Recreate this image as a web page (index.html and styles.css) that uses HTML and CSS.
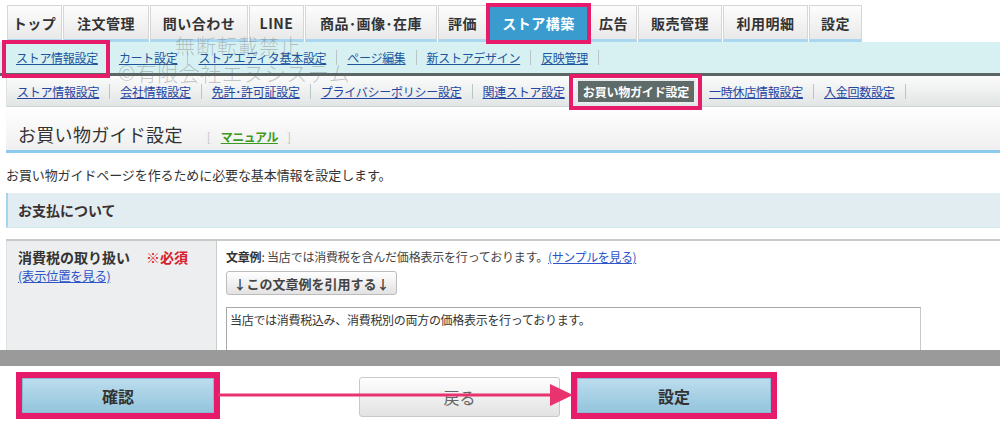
FILE: index.html
```html
<!DOCTYPE html>
<html lang="ja">
<head>
<meta charset="utf-8">
<title>お買い物ガイド設定</title>
<link rel="stylesheet" href="styles.css">
</head>
<body>
<nav class="tabs">
  <div class="tab w1">トップ</div>
  <div class="tab w2">注文管理</div>
  <div class="tab w3">問い合わせ</div>
  <div class="tab w4">LINE</div>
  <div class="tab w5">商品･画像･在庫</div>
  <div class="tab w6">評価</div>
  <div class="tab w7 active">ストア構築</div>
  <div class="tab w8">広告</div>
  <div class="tab w9">販売管理</div>
  <div class="tab w10">利用明細</div>
  <div class="tab w11">設定</div>
</nav>
<nav class="subnav">
  <a class="link hl">ストア情報設定</a><span class="sep"></span>
  <a class="link">カート設定</a><span class="sep"></span>
  <a class="link">ストアエディタ基本設定</a><span class="sep"></span>
  <a class="link">ページ編集</a><span class="sep"></span>
  <a class="link">新ストアデザイン</a><span class="sep"></span>
  <a class="link">反映管理</a><span class="sep"></span>
</nav>
<nav class="subnav2">
  <a class="link">ストア情報設定</a><span class="sep"></span>
  <a class="link">会社情報設定</a><span class="sep"></span>
  <a class="link">免許･許可証設定</a><span class="sep"></span>
  <a class="link">プライバシーポリシー設定</a><span class="sep"></span>
  <a class="link">関連ストア設定</a>
  <span class="current">お買い物ガイド設定</span>
  <a class="link">一時休店情報設定</a><span class="sep"></span>
  <a class="link">入金回数設定</a><span class="sep"></span>
</nav>
<div class="heading">
  <h1>お買い物ガイド設定</h1>
  <span class="manual"><span class="br">[</span><a class="mlink">マニュアル</a><span class="br">]</span></span>
</div>
<p class="desc">お買い物ガイドページを作るために必要な基本情報を設定します。</p>
<div class="section">お支払について</div>
<div class="row">
  <div class="label">
    <div class="lt"><b>消費税の取り扱い</b><b class="req">※必須</b></div>
    <a class="blink">(表示位置を見る)</a>
  </div>
  <div class="field">
    <div class="ex"><b>文章例</b>: 当店では消費税を含んだ価格表示を行っております。<a class="blink">(サンプルを見る)</a></div>
    <button class="quote">↓この文章例を引用する↓</button>
    <div class="textarea">当店では消費税込み、消費税別の両方の価格表示を行っております。</div>
  </div>
</div>
<div class="band"></div>
<div class="actions">
  <button class="btn blue confirm">確認</button>
  <button class="btn gray back">戻る</button>
  <button class="btn blue">設定</button>
</div>
<div class="watermark">
  <div class="wm1">無断転載禁止</div>
  <div class="wm2">©有限会社エヌシステム</div>
</div>
<svg class="arrow" width="1000" height="431" viewBox="0 0 1000 431">
  <line x1="218" y1="395" x2="556" y2="395" stroke="#e8336e" stroke-width="3"/>
  <polygon points="550,384 573,395 550,406" fill="#e8336e"/>
</svg>
</body>
</html>
```
FILE: styles.css
```css
* { box-sizing: border-box; margin: 0; padding: 0; }
body {
  width: 1000px;
  height: 431px;
  overflow: hidden;
  position: relative;
  background: #fff;
  color: #333;
  font-family: "Noto Sans CJK JP", "Noto Sans", sans-serif;
}
a { cursor: pointer; }

/* top tabs */
.tabs {
  display: flex;
  gap: 1px;
  padding: 5px 0 0 7px;
  height: 42px;
}
.tab {
  display: flex;
  align-items: center;
  justify-content: center;
  height: 37px;
  border: 1px solid #d6d6d6;
  border-bottom: 3px solid #a9d7ef;
  background: linear-gradient(#fdfdfd, #e9e9e9);
  font-size: 14px;
  font-weight: bold;
  letter-spacing: 0.5px;
  color: #333;
}
.w1 { width: 55px; }
.w2 { width: 86px; }
.w3 { width: 98px; }
.w4 { width: 55px; }
.w5 { width: 132px; }
.w6 { width: 49px; }
.w7 { width: 101px; }
.w8 { width: 47px; }
.w9 { width: 84px; }
.w10 { width: 85px; }
.w11 { width: 53px; }
.tab.active {
  background: #3a9bcf;
  border-color: #3a9bcf;
  color: #fff;
  position: relative;
  z-index: 2;
  outline: 4px solid #e61b69;
  outline-offset: -2px;
}

/* sub navigation */
.subnav {
  display: flex;
  align-items: center;
  height: 34px;
  padding-left: 16px;
  background: #d7f1f3;
  border-bottom: 3px solid #5b6664;
  font-size: 12px;
  letter-spacing: -0.3px;
}
.link {
  color: #1c559d;
  text-decoration: underline;
  white-space: nowrap;
}
.sep {
  width: 1px;
  height: 15px;
  background: #b9c6c8;
  margin: 0 10px;
}
.hl { position: relative; }
.hl::after {
  content: "";
  position: absolute;
  left: -14px;
  right: -12px;
  top: -9px;
  bottom: -12px;
  border: 4px solid #e61b69;
  z-index: 3;
}

.subnav2 {
  display: flex;
  align-items: center;
  height: 31px;
  margin-left: 6px;
  padding-left: 10px;
  background: linear-gradient(#fbfbfb, #e2e5e5);
  border-left: 1px solid #dfe2e2;
  border-bottom: 1px solid #cdd2d2;
  font-size: 12px;
  letter-spacing: -0.25px;
}
.subnav2 .link { color: #2545a2; }
.current {
  position: relative;
  margin: 0 13px 0 11px;
  height: 25px;
  display: flex;
  align-items: center;
  padding: 0 5px;
  background: #5f6b69;
  border: 2px solid #e8ecec;
  color: #fff;
  font-weight: bold;
  letter-spacing: -0.2px;
}
.current::after {
  content: "";
  position: absolute;
  left: -9px;
  right: -8px;
  top: -7px;
  bottom: -8px;
  border: 4px solid #e61b69;
}

/* heading */
.heading {
  display: flex;
  align-items: center;
  height: 46px;
  margin-left: 6px;
  padding: 10px 0 0 12px;
  background: linear-gradient(#ffffff, #efefef);
  border-bottom: 3px solid #8dcaf0;
}
.heading h1 {
  font-size: 18px;
  font-weight: normal;
  color: #333;
  letter-spacing: 0.3px;
}
.manual {
  margin-left: 24px;
  margin-top: 5px;
  font-size: 12px;
  display: flex;
  align-items: center;
}
.br { color: #c4c4c4; }
.mlink {
  color: #3c9a1f;
  font-weight: bold;
  text-decoration: underline;
  margin: 0 9px 0 10px;
  letter-spacing: -0.5px;
}

.desc {
  margin: 13px 0 0 6px;
  font-size: 13px;
  line-height: 18px;
  letter-spacing: -0.1px;
  color: #333;
}

.section {
  display: flex;
  align-items: center;
  height: 35px;
  margin: 9px 0 0 6px;
  padding-left: 10px;
  background: #e1edf1;
  border-left: 2px solid #a6d4ee;
  border-bottom: 1px solid #d3eaea;
  font-size: 14px;
  font-weight: bold;
  color: #3a3030;
}

/* form row */
.row {
  display: flex;
  height: 111px;
  margin: 11px 0 0 6px;
  border-top: 2px solid #c6cac8;
  overflow: hidden;
}
.label {
  width: 211px;
  flex: none;
  background: #eceeef;
  border-left: 1px solid #dde0e0;
  border-right: 1px solid #c8ccca;
  padding: 6px 0 0 11px;
}
.lt {
  font-size: 14px;
  line-height: 20px;
  color: #333;
}
.req {
  color: #d9202a;
  margin-left: 16px;
}
.blink {
  display: block;
  color: #2d55c9;
  text-decoration: underline;
  font-size: 12.5px;
  line-height: 17px;
  letter-spacing: -0.4px;
}
.field {
  flex: 1;
  padding: 6px 0 0 9px;
}
.ex {
  font-size: 12px;
  line-height: 20px;
  letter-spacing: -0.2px;
  color: #444;
}
.ex b { color: #333; }
.ex .blink { display: inline; font-size: 12px; }
.quote {
  display: block;
  margin-top: 4px;
  width: 171px;
  height: 24px;
  background: linear-gradient(#ffffff, #e2e2e2);
  border: 1px solid #bcbcbc;
  border-radius: 3px;
  font-family: inherit;
  font-size: 13px;
  font-weight: bold;
  color: #444;
  letter-spacing: 0;
}
.textarea {
  margin-top: 12px;
  width: 695px;
  height: 70px;
  border: 1px solid #a8a8a8;
  border-right-color: #c8c8c8;
  padding: 3px 3px;
  font-size: 12px;
  line-height: 18px;
  letter-spacing: -0.3px;
  color: #333;
}

.band {
  height: 16px;
  background: #9a9a9a;
}

/* buttons */
.actions {
  display: flex;
  align-items: flex-start;
  padding: 12px 0 0 22px;
}
.btn {
  position: relative;
  font-family: inherit;
  font-size: 16px;
}
.blue {
  width: 194px;
  height: 35px;
  background: linear-gradient(#bcdcee, #93c5dc);
  border: 1px solid #8bbbd4;
  font-weight: bold;
  color: #333;
}
.blue::after {
  content: "";
  position: absolute;
  left: -7px;
  right: -7px;
  top: -7px;
  bottom: -7px;
  border: 6px solid #e61b69;
}
.confirm { width: 192px; margin-right: 145px; }
.gray {
  width: 201px;
  height: 40px;
  margin-top: -1px;
  margin-right: 17px;
  background: linear-gradient(#fefefe, #e2e2e2);
  border: 1px solid #c8c8c8;
  border-radius: 3px;
  color: #666;
}

/* annotations */
.watermark {
  position: absolute;
  left: 118px;
  top: 33px;
  color: rgba(100, 100, 100, 0.35);
  font-weight: 300;
  pointer-events: none;
}
.wm1 {
  margin-left: 57px;
  font-size: 20px;
  line-height: 26px;
  letter-spacing: 1px;
}
.wm2 {
  font-size: 21px;
  line-height: 26px;
  letter-spacing: 0.5px;
}
.arrow {
  position: absolute;
  left: 0;
  top: 0;
  pointer-events: none;
}
```
